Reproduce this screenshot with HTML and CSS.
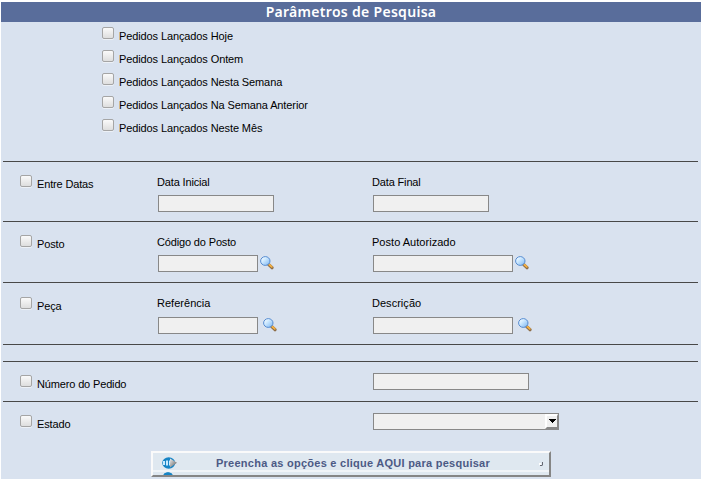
FILE: index.html
```html
<!DOCTYPE html>
<html lang="pt-BR">
<head>
<meta charset="utf-8">
<title>Parâmetros de Pesquisa</title>
<link rel="stylesheet" href="styles.css">
</head>
<body>
<svg class="defs" width="0" height="0" aria-hidden="true">
  <defs>
    <linearGradient id="lens" x1="0" y1="0" x2="1" y2="1"><stop offset="0" stop-color="#fff"/><stop offset=".35" stop-color="#d5edff"/><stop offset="1" stop-color="#78b4f2"/></linearGradient>
    <linearGradient id="tip" x1="0" x2="1" y2="1"><stop offset="0" stop-color="#eee"/><stop offset="1" stop-color="#555"/></linearGradient>
    <symbol id="search" viewBox="0 0 14 14">
      <path d="M8.8 8.7l3.2 3" stroke="#8d6d48" stroke-width="3.2" stroke-linecap="round"/>
      <path d="M9.2 8.5l2.6 2.4" stroke="#f5b040" stroke-width="1.8" stroke-linecap="round"/>
      <ellipse cx="5.3" cy="5" rx="4.7" ry="4.4" fill="url(#lens)" stroke="#568bd0"/>
    </symbol>
  </defs>
</svg>
<form class="panel">
  <h1 class="title">Parâmetros de Pesquisa</h1>
  <section class="row periods">
    <label class="option"><input type="checkbox" class="check"><span>Pedidos Lançados Hoje</span></label>
    <label class="option"><input type="checkbox" class="check"><span>Pedidos Lançados Ontem</span></label>
    <label class="option"><input type="checkbox" class="check"><span>Pedidos Lançados Nesta Semana</span></label>
    <label class="option"><input type="checkbox" class="check"><span>Pedidos Lançados Na Semana Anterior</span></label>
    <label class="option"><input type="checkbox" class="check"><span>Pedidos Lançados Neste Mês</span></label>
  </section>
  <section class="row filter dates">
    <label class="option"><input type="checkbox" class="check"><span>Entre Datas</span></label>
    <div class="field"><span class="caption tight">Data Inicial</span><div class="control"><input class="box date"></div></div>
    <div class="field"><span class="caption tight">Data Final</span><div class="control"><input class="box date"></div></div>
  </section>
  <section class="row filter post">
    <label class="option"><input type="checkbox" class="check"><span>Posto</span></label>
    <div class="field"><span class="caption tight">Código do Posto</span><div class="control"><input class="box code"><svg class="search"><use href="#search"/></svg></div></div>
    <div class="field"><span class="caption">Posto Autorizado</span><div class="control"><input class="box name"><svg class="search"><use href="#search"/></svg></div></div>
  </section>
  <section class="row filter part">
    <label class="option"><input type="checkbox" class="check"><span>Peça</span></label>
    <div class="field"><span class="caption">Referência</span><div class="control"><input class="box code"><svg class="search"><use href="#search"/></svg></div></div>
    <div class="field"><span class="caption">Descrição</span><div class="control"><input class="box name"><svg class="search"><use href="#search"/></svg></div></div>
  </section>
  <div class="row spacer"></div>
  <section class="row filter single">
    <label class="option wide"><input type="checkbox" class="check"><span>Número do Pedido</span></label>
    <input class="box order">
  </section>
  <section class="row filter single last">
    <label class="option wide"><input type="checkbox" class="check"><span>Estado</span></label>
    <div class="box select"><span class="drop"><svg width="7" height="5"><path d="M0 0h7v1H6v1H5v1H4v1H3V3H2V2H1V1H0z"/></svg></span></div>
  </section>
  <button type="button" class="submit">
    <span class="face">
      <svg class="go" width="16" height="14" viewBox="0 0 16 14"><ellipse cx="6.7" cy="7" rx="6.5" ry="5.8" fill="#1684c5"/><path d="M1 5h2v4H1zM4 4.5h2v5H4zM7 4.5h2v5H7z" fill="#c8eaff"/><path d="M8 2.5l7 4.3-7 4.7z" fill="url(#tip)"/></svg>
      <span class="submit-text">Preencha as opções e clique AQUI para pesquisar</span>
      <svg class="grip" width="5" height="5"><path d="M3 0h1v3L3 4H1V3h2z" fill="#656872"/><path d="M0 1h2v2H0z" fill="#fff"/></svg>
    </span>
    <span class="repeat"></span>
  </button>
</form>
</body>
</html>
```
FILE: styles.css
```css
* { box-sizing: border-box; }
body {
  margin: 0;
  padding: 2px 2px 2px 1px;
  background: #fff;
  color: #000;
  font: 11px/13px "Liberation Sans", Arial, sans-serif;
}
.defs { position: absolute; }
.panel { width: 700px; height: 477px; background: #d9e2ef; }
.title {
  height: 20px;
  margin: 0;
  background: #596d9b;
  color: #fff;
  font: 600 14px/20px "Noto Sans", sans-serif;
  letter-spacing: .3px;
  text-align: center;
}
.row { width: 695px; margin-left: 2px; border-bottom: 1px solid #484848; }
.periods { height: 140px; padding: 5px 0 0 99px; }
.option { display: flex; height: 23px; gap: 5px; }
.option span { padding-top: 3px; letter-spacing: -.11px; }
.filter .option span { letter-spacing: -.15px; }
.check {
  appearance: none;
  flex: none;
  width: 12px;
  height: 12px;
  margin: 0;
  border: 1px solid #a5a5a5;
  border-radius: 2px;
  background: linear-gradient(#fafafa, #dedede);
  box-shadow: 0 1px 0 #edf1f7;
}
.filter {
  display: grid;
  grid-template-columns: 138px 215px 1fr;
  align-items: start;
  height: 60px;
  padding: 13px 0 0 17px;
}
.post { height: 61px; }
.part { height: 62px; padding-top: 14px; }
.spacer { height: 17px; }
.single { height: 40px; padding-top: 11px; }
.single .option { padding-top: 2px; }
.last { height: 49px; border-bottom: 0; }
.wide { grid-column: span 2; }
.caption { display: block; height: 20px; margin-left: -1px; padding-top: 1px; letter-spacing: .03px; }
.tight { letter-spacing: -.15px; }
.part .caption { padding-top: 0; }
.control { display: flex; gap: 2px; }
.part .control { gap: 5px; }
.box {
  display: block;
  height: 17px;
  margin: 0;
  padding: 0 2px;
  border: 1px solid #888;
  border-radius: 0;
  background: #f0f0f0;
  font: inherit;
}
.date { width: 116px; }
.code { width: 100px; }
.name { width: 140px; }
.order { width: 156px; }
.search { width: 14px; height: 14px; margin-top: 1px; }
.select { display: flex; justify-content: flex-end; width: 186px; padding: 0; }
.drop {
  display: grid;
  place-items: center;
  width: 13px;
  height: 15px;
  border: 2px solid;
  border-color: #fff #888 #888 #fff;
  border-right-width: 1px;
  background: #f0f0f0;
}
.submit {
  display: block;
  width: 400px;
  height: 26px;
  margin-left: 150px;
  padding: 0;
  overflow: hidden;
  border: 2px solid;
  border-color: #fafafa #858585 #858585 #fafafa;
  border-radius: 0;
  background: #dfe8f0;
}
.face {
  display: grid;
  grid-template-columns: 16px 1fr 5px;
  align-items: center;
  height: 17px;
  padding: 0 5px 0 9px;
}
.submit-text {
  padding: 2px 11px 0 0;
  color: #4c5a85;
  font: bold 11px/17px "Liberation Sans", Arial, sans-serif;
  letter-spacing: .26px;
  text-align: center;
}
.grip { margin-top: 4px; }
.repeat { display: block; height: 5px; border-top: 2px solid #f0f4f8; background: radial-gradient(ellipse 5px 3px at 15px 3px, #1684c5 80%, transparent) #dfe8f0; }
```
